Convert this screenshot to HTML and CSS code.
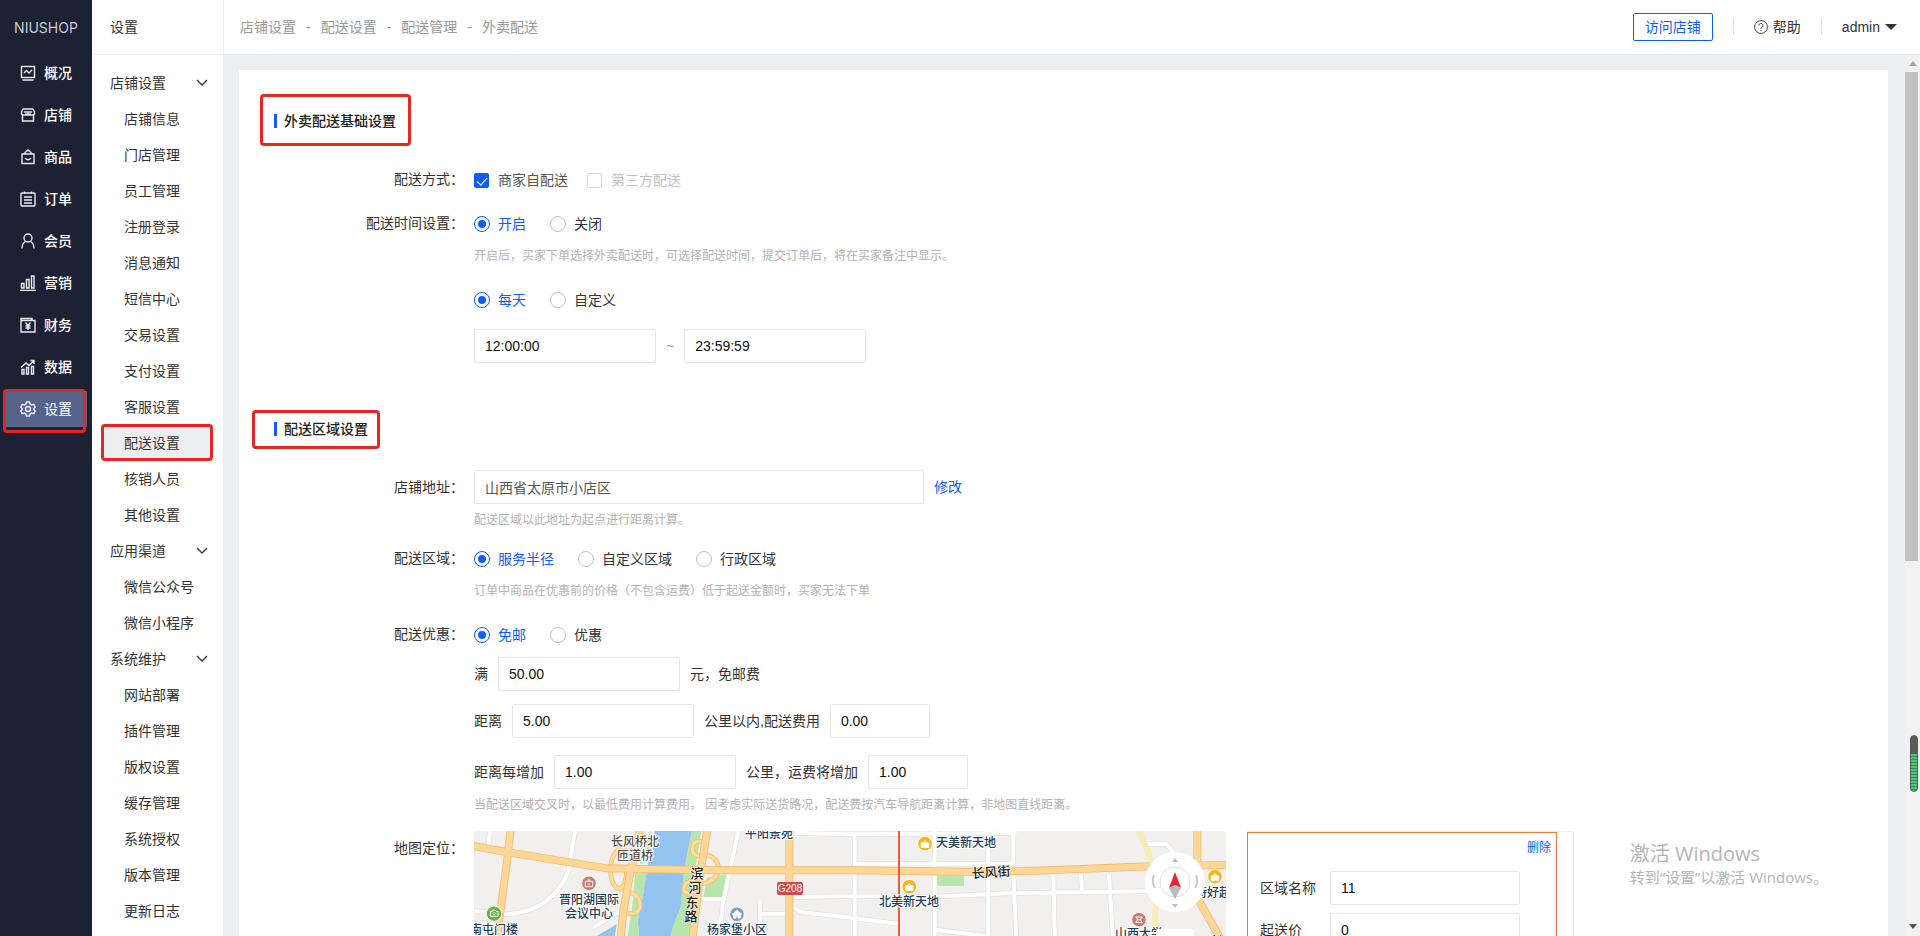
FILE: index.html
```html
<!DOCTYPE html>
<html lang="zh-CN">
<head>
<meta charset="utf-8">
<title>外卖配送</title>
<link rel="stylesheet" href="styles.css">
</head>
<body>
<div class="app">
  <nav class="rail">
    <div class="logo">NIUSHOP</div>
    <a class="rail-item" href="#"><svg viewBox="0 0 16 16"><rect x="1.5" y="1.5" width="13" height="11"/><path d="M4 8l2.500-2.500 2.500 2.500 3-3M2.500 15h11"/></svg>概况</a>
    <a class="rail-item" href="#"><svg viewBox="0 0 16 16"><path d="M3 2h10l1.500 3v1.500a1.500 1.500 0 0 1-1.500 1.500h-10a1.500 1.500 0 0 1-1.500-1.500v-1.500zM4 5h8M5.500 6.500q1.200 2 2.500 0 1.200 2 2.500 0M2.500 8v6h11V8"/></svg>店铺</a>
    <a class="rail-item" href="#"><svg viewBox="0 0 16 16"><path d="M2 5h12v9.500H2zM5 5V3.500L8 1l3 2.500V5M5 9q3 3.500 6 0"/></svg>商品</a>
    <a class="rail-item" href="#"><svg viewBox="0 0 16 16"><rect x="1" y="2" width="14" height="13" rx="1"/><path d="M4.500 0.500v2.500M11.500 0.500v2.500M4 6h8M4 9h8M4 12h8"/></svg>订单</a>
    <a class="rail-item" href="#"><svg viewBox="0 0 16 16"><circle cx="8" cy="5" r="4"/><path d="M2 15.500q0-5 3.500-7M14 15.500q0-5-3.500-7"/></svg>会员</a>
    <a class="rail-item" href="#"><svg viewBox="0 0 16 16"><path d="M1.500 8.500h2.500v4.500H1.500zM6.500 4.500h2.500V13H6.500zM11.500 1h2.500v12h-2.500zM0 15.500h16"/></svg>营销</a>
    <a class="rail-item" href="#"><svg viewBox="0 0 16 16"><path d="M1 3.500V15h14V3.500zM1 3.500V1.500h11v2M5.500 5.500L8 8.500l2.500-3M8 8.500V13M5.500 9h5M5.500 11h5"/></svg>财务</a>
    <a class="rail-item" href="#"><svg viewBox="0 0 16 16"><path d="M2 10.500h2v4.500H2zM6.500 8.500h2V15h-2zM11.500 7.500h2V15h-2zM1 8.500l5-4.500 3 2.500 5-5M10.500 1.500H14V5"/></svg>数据</a>
    <a class="rail-item active" href="#"><svg viewBox="0 0 16 16"><circle cx="8" cy="8" r="2.500"/><path d="M6.500 1h3l.6 2 1.600.9 2-.5 1.500 2.600-1.400 1.500v1l1.400 1.500-1.500 2.600-2-.5-1.600.9-.6 2h-3l-.6-2-1.600-.9-2 .5L.8 10l1.400-1.500v-1L.8 6l1.500-2.600 2 .5L5.900 3z"/></svg>设置</a>
  </nav>

  <nav class="menu">
    <h1 class="menu-title">设置</h1>
    <div class="menu-list">
      <a class="group" href="#">店铺设置<svg viewBox="0 0 12 8"><path d="M1 1l5 5 5-5"/></svg></a>
      <a class="entry" href="#">店铺信息</a>
      <a class="entry" href="#">门店管理</a>
      <a class="entry" href="#">员工管理</a>
      <a class="entry" href="#">注册登录</a>
      <a class="entry" href="#">消息通知</a>
      <a class="entry" href="#">短信中心</a>
      <a class="entry" href="#">交易设置</a>
      <a class="entry" href="#">支付设置</a>
      <a class="entry" href="#">客服设置</a>
      <a class="entry current" href="#">配送设置</a>
      <a class="entry" href="#">核销人员</a>
      <a class="entry" href="#">其他设置</a>
      <a class="group" href="#">应用渠道<svg viewBox="0 0 12 8"><path d="M1 1l5 5 5-5"/></svg></a>
      <a class="entry" href="#">微信公众号</a>
      <a class="entry" href="#">微信小程序</a>
      <a class="group" href="#">系统维护<svg viewBox="0 0 12 8"><path d="M1 1l5 5 5-5"/></svg></a>
      <a class="entry" href="#">网站部署</a>
      <a class="entry" href="#">插件管理</a>
      <a class="entry" href="#">版权设置</a>
      <a class="entry" href="#">缓存管理</a>
      <a class="entry" href="#">系统授权</a>
      <a class="entry" href="#">版本管理</a>
      <a class="entry" href="#">更新日志</a>
    </div>
  </nav>

  <div class="page">
    <header class="topbar">
      <div class="crumbs"><a href="#">店铺设置</a><span>-</span><a href="#">配送设置</a><span>-</span><a href="#">配送管理</a><span>-</span><a href="#">外卖配送</a></div>
      <button class="visit" type="button">访问店铺</button>
      <a class="help" href="#"><svg viewBox="0 0 14 14"><circle cx="7" cy="7" r="6.400"/><path d="M5 5.500a2 2 0 1 1 3 1.700q-1 .5-1 1.500M7 10v1"/></svg>帮助</a>
      <button class="user" type="button">admin<span class="caret"></span></button>
    </header>

    <div class="body">
      <main class="card">
        <h2 class="section-title boxed-tall"><span>外卖配送基础设置</span></h2>
        <div class="row">
          <span class="label">配送方式：</span>
          <div class="choices">
            <label class="choice plain"><input type="checkbox" checked>商家自配送</label>
            <label class="choice off"><input type="checkbox" disabled>第三方配送</label>
          </div>
        </div>
        <div class="row">
          <span class="label">配送时间设置：</span>
          <div class="field">
            <div class="choices">
              <label class="choice"><input type="radio" name="time" checked><span>开启</span></label>
              <label class="choice"><input type="radio" name="time"><span>关闭</span></label>
            </div>
            <p class="hint">开启后，买家下单选择外卖配送时，可选择配送时间，提交订单后，将在买家备注中显示。</p>
          </div>
        </div>
        <div class="row after-hint">
          <span class="label"></span>
          <div class="field">
            <div class="choices">
              <label class="choice"><input type="radio" name="day" checked><span>每天</span></label>
              <label class="choice"><input type="radio" name="day"><span>自定义</span></label>
            </div>
            <div class="line">
              <input class="text" type="text" value="12:00:00" aria-label="开始时间"><span class="tilde">~</span><input class="text" type="text" value="23:59:59" aria-label="结束时间">
            </div>
          </div>
        </div>

        <h2 class="section-title boxed-low"><span>配送区域设置</span></h2>
        <div class="row">
          <label class="label" for="addr">店铺地址：</label>
          <div class="field">
            <div class="line first"><input class="text wide" id="addr" type="text" value="山西省太原市小店区"><a class="link" href="#">修改</a></div>
            <p class="hint">配送区域以此地址为起点进行距离计算。</p>
          </div>
        </div>
        <div class="row after-note">
          <span class="label">配送区域：</span>
          <div class="field">
            <div class="choices">
              <label class="choice"><input type="radio" name="area" checked><span>服务半径</span></label>
              <label class="choice"><input type="radio" name="area"><span>自定义区域</span></label>
              <label class="choice"><input type="radio" name="area"><span>行政区域</span></label>
            </div>
            <p class="hint">订单中商品在优惠前的价格（不包含运费）低于起送金额时，买家无法下单</p>
          </div>
        </div>
        <div class="row after-hint">
          <span class="label">配送优惠：</span>
          <div class="field">
            <div class="choices">
              <label class="choice"><input type="radio" name="deal" checked><span>免邮</span></label>
              <label class="choice"><input type="radio" name="deal"><span>优惠</span></label>
            </div>
            <div class="line close"><label for="full">满</label><input class="text" id="full" type="text" value="50.00"><span>元，免邮费</span></div>
            <div class="line"><label for="dist">距离</label><input class="text" id="dist" type="text" value="5.00"><label for="fee">公里以内,配送费用</label><input class="text short" id="fee" type="text" value="0.00"></div>
            <div class="line loose"><label for="step">距离每增加</label><input class="text" id="step" type="text" value="1.00"><label for="more">公里，运费将增加</label><input class="text short" id="more" type="text" value="1.00"></div>
            <p class="hint">当配送区域交叉时，以最低费用计算费用。 因考虑实际送货路况，配送费按汽车导航距离计算，非地图直线距离。</p>
          </div>
        </div>
        <div class="row after-hint">
          <span class="label">地图定位：</span>
          <svg class="map" viewBox="0 0 752 500" preserveAspectRatio="xMinYMin slice">
            <rect class="land" width="752" height="500"/>
            <g transform="translate(-14 -20) scale(.33333)">
              <path class="water" d="M585 55L560 180 548 260 533 330 540 400H625L645 330 662 290 672 180 697 55zM405 378L470 340 462 390z"/>
              <path class="green" d="M525 186H560L548 260 533 330 540 400H500L520 260zM697 55H725L705 180 690 400H625L645 330 662 290 672 180zM740 200L800 190 790 262H730zM540 110L575 60 566 150 540 160zM1430 193h82v32h-82z"/>
              <path class="lane-edge" d="M345 60L325 180Q280 300 140 310L44 300M90 60L85 105M835 60L790 270M725 265H790L775 400M900 268V340M905 308H1000M1005 290L1020 303 1190 322M1000 258L1185 255 1400 258 1660 246 1940 242 2100 240M1000 65L1165 70 1670 66M1184 70V400M1184 158H1655L1585 160M1424 60V400M1585 60L1582 60M1585 60V400M1660 60V160M1660 190L1670 400M1780 190L1785 400M1863 190L1866 245M1947 190L1960 400M1170 320L1315 338M1430 357L1580 375M400 350L480 300M2060 100H2120L2145 130"/>
              <path class="lane" d="M345 60L325 180Q280 300 140 310L44 300M90 60L85 105M835 60L790 270M725 265H790L775 400M900 268V340M905 308H1000M1005 290L1020 303 1190 322M1000 258L1185 255 1400 258 1660 246 1940 242 2100 240M1000 65L1165 70 1670 66M1184 70V400M1184 158H1655L1585 160M1424 60V400M1585 60V400M1660 60V160M1660 190L1670 400M1780 190L1785 400M1863 190L1866 245M1947 190L1960 400M1170 320L1315 338M1430 357L1580 375M400 350L480 300M2060 100H2120L2145 130"/>
              <path class="ramp-edge" d="M500 105Q455 115 452 170Q450 225 480 235Q500 215 500 180M495 240Q545 250 540 290Q530 315 500 305M738 95Q700 80 697 115Q700 140 735 135M735 130Q780 140 775 185Q755 220 715 220M710 210Q670 205 672 240Q690 255 715 245"/>
              <path class="ramp" d="M500 105Q455 115 452 170Q450 225 480 235Q500 215 500 180M495 240Q545 250 540 290Q530 315 500 305M738 95Q700 80 697 115Q700 140 735 135M735 130Q780 140 775 185Q755 220 715 220M710 210Q670 205 672 240Q690 255 715 245"/>
              <path class="main-edge" d="M152 55L140 160 108 400M540 55L508 200 490 300 480 400M742 55L722 180 695 400M988 55V400M2212 55V260L2285 390M40 105L150 125 440 172 780 178 1180 178 1570 183 1760 178 2070 166 2300 162"/>
              <path class="pale" d="M2035 55L2075 150 2090 240 2080 400"/>
              <path class="main" d="M152 55L140 160 108 400M540 55L508 200 490 300 480 400M742 55L722 180 695 400M988 55V400M2212 55V260L2285 390M40 105L150 125 440 172 780 178 1180 178 1570 183 1760 178 2070 166 2300 162"/>
              <path class="boundary" d="M1317 55V1600"/>
              <g class="pin">
                <circle cx="387" cy="217" r="22" fill="#c97b6e"/><path d="M376 211h22v16h-22zM382 207h10M384 219h6"/>
                <circle cx="102" cy="308" r="23" fill="#6dae45"/><path d="M91 301h6l3-4h5l3 4h6v15H91z"/><circle cx="102" cy="308" r="3"/>
                <circle cx="831" cy="310" r="22" fill="#7f9fc9"/><path class="solid" d="M831 298l14 12h-4v11h-7v-8h-6v8h-7v-11h-4z"/>
                <circle cx="1395" cy="98" r="22" fill="#f6b51e"/><path class="solid" d="M1384 96h22v13h-22z"/><path d="M1389 98q6-18 12 0"/>
                <circle cx="1348" cy="227" r="22" fill="#f6b51e"/><path class="solid" d="M1337 225h22v13h-22z"/><path d="M1342 227q6-18 12 0"/>
                <circle cx="2265" cy="197" r="22" fill="#f6b51e"/><path class="solid" d="M2254 195h22v13h-22z"/><path d="M2259 197q6-18 12 0"/>
                <circle cx="2037" cy="326" r="22" fill="#c97b6e"/><path d="M2027 318h20M2027 334h20M2027 318q10 8 0 16M2047 318q-10 8 0 16M2030 326h14"/>
              </g>
            </g>
            <g class="map-text">
              <g class="road-name"><text x="161" y="15">长风桥北</text><text x="161" y="29">匝道桥</text></g>
              <text x="295" y="7">平阳景苑</text>
              <g class="street"><text x="223" y="47">滨</text><text x="221" y="61">河</text><text x="218" y="76">东</text><text x="217" y="90">路</text><text x="517" y="46" transform="rotate(-4 517 41)">长风街</text><text x="743" y="115">长</text></g>
              <text x="115" y="73">晋阳湖国际</text><text x="115" y="87">会议中心</text>
              <text x="20" y="103">南屯门楼</text><text x="263" y="103">杨家堡小区</text>
              <rect x="303" y="51" width="26" height="13" rx="2" fill="#d0494b"/><text class="badge" x="316" y="61">G208</text>
              <text x="492" y="16">天美新天地</text><text x="435" y="75">北美新天地</text><text x="739" y="66">特好超</text><text x="665" y="107">山西大学</text>
            </g>
            <rect x="682" y="98" width="38" height="30" rx="2" fill="#fff"/>
            <circle cx="701" cy="51" r="30" fill="#fff"/><circle cx="701" cy="51" r="15" fill="#fff" stroke="#e0e0e0"/>
            <path d="M701 41l6 16-6-3-6 3z" fill="#e8232f"/><path d="M695 57l6-3 6 3-6 11z" fill="#b9bcc0"/>
            <path d="M698 31l3-4 3 4zM698 73l3 4 3-4z" fill="#bbb"/><path d="M680 44q-3 7 1 13M722 44q3 7-1 13" fill="none" stroke="#c4c8cc" stroke-width="2"/>
          </svg>
          <aside class="zones">
            <section class="zone">
              <a class="remove" href="#">删除</a>
              <div class="zone-row"><label for="zone-name">区域名称</label><input class="text" id="zone-name" type="text" value="11"></div>
              <div class="zone-row"><label for="zone-min">起送价</label><input class="text" id="zone-min" type="text" value="0"></div>
            </section>
          </aside>
        </div>
      </main>
      <div class="scroll"><span class="up"></span><span class="thumb"></span><span class="down"></span></div>
    </div>
  </div>
  <div class="watermark"><strong>激活 Windows</strong><span>转到“设置”以激活 Windows。</span></div>
  <div class="gauge"></div>
</div>
</body>
</html>
```
FILE: styles.css
```css
* { box-sizing: border-box; }
body {
  margin: 0;
  font: 14px/20px "Liberation Sans", "Noto Sans CJK SC", sans-serif;
  color: #333;
}
a { color: inherit; text-decoration: none; }
h1, h2, p { margin: 0; font-weight: 400; }
button, input { font: inherit; color: inherit; margin: 0; }
.app { display: flex; height: 100vh; overflow: hidden; position: relative; background: #eceef2; }

.rail { flex: none; width: 92px; background: #1c2233; color: #fff; padding: 0 5px; }
.logo { height: 55px; line-height: 56px; font-family: Inter, sans-serif; font-size: 14px; color: #c9ccd4; text-align: center; }
.rail-item { position: relative; display: flex; align-items: center; gap: 8px; height: 36px; margin-bottom: 6px; padding-left: 15px; font-weight: 500; }
.rail-item svg { width: 16px; height: 16px; fill: none; stroke: #e8eaf0; stroke-width: 1.4; }
.rail-item.active { background: #56638a; font-weight: 400; }
.rail-item.active::after { content: ""; position: absolute; inset: -2px 1px -6px -2px; border: 3px solid #e5271f; border-radius: 4px; }

.menu { flex: none; width: 132px; background: #fff; border-right: 1px solid #eceef2; }
.menu-title { height: 55px; padding-left: 18px; border-bottom: 1px solid #eceef2; font-size: 14px; line-height: 54px; }
.menu-list { padding-top: 10px; }
.menu-list a { display: block; height: 36px; line-height: 36px; padding-left: 32px; }
.menu-list .group { display: flex; align-items: center; justify-content: space-between; padding: 0 15px 0 18px; }
.group svg { width: 12px; height: 8px; fill: none; stroke: #333; stroke-width: 1.3; }
.menu-list .current { position: relative; margin: 0 11px; padding-left: 21px; background: #eceef2; }
.current::after { content: ""; position: absolute; inset: -1px -1px 0 -2px; border: 3px solid #e5271f; border-radius: 4px; }

.page { flex: 1; min-width: 0; display: flex; flex-direction: column; }
.topbar { flex: none; display: flex; align-items: center; height: 55px; padding: 0 23px 0 16px; background: #fff; border-bottom: 1px solid #e6e8ec; }
.crumbs { flex: 1; display: flex; gap: 10px; color: #999; }
.visit { height: 28px; width: 80px; padding: 0; border: 1px solid #105cfb; border-radius: 2px; background: #fff; color: #105cfb; }
.help, .user { display: flex; align-items: center; margin-left: 20px; padding-left: 20px; }
.help { gap: 5px; }
.help, .user { height: 16px; border: 0; border-left: 1px solid #e0e0e0; background: none; }
.user { padding-right: 0; gap: 5px; }
.help svg { width: 14px; height: 14px; fill: none; stroke: #444; }
.caret { border: 6px solid transparent; border-top-color: #333; border-bottom: 0; }

.body { flex: 1; min-height: 0; display: flex; overflow: hidden; }
.card { flex: 1; min-width: 0; margin: 15px 17px 0 15px; padding-top: 41px; background: #fff; }
.section-title { position: relative; width: max-content; margin: 0 0 31px 35px; padding: 3px 0; border: 0; font-size: 14px; line-height: 14px; font-weight: 500; color: #222; }
.section-title span { display: block; padding-left: 7px; border-left: 3px solid #105cfb; }
.section-title::after { content: ""; position: absolute; border: 3px solid #e5271f; border-radius: 4px; }
.boxed-tall::after { inset: -17px -15px -15px -14px; }
.boxed-low { margin-top: 56px; }
.boxed-low::after { inset: -9px -12px -10px -22px; }

.row { display: flex; align-items: flex-start; margin-top: 10px; }
.section-title + .row { margin-top: 0; }
.row.after-hint { margin-top: 16px; }
.row.after-note { margin-top: 11px; }
.label { flex: none; width: 225px; margin-right: 10px; line-height: 34px; text-align: right; white-space: nowrap; }
.choices { display: flex; gap: 24px; height: 34px; padding-top: 2px; align-items: center; }
.choice { display: flex; align-items: center; gap: 8px; }
.choice input { appearance: none; position: relative; width: 16px; height: 16px; border: 1px solid #c2c2c2; border-radius: 50%; background: #fff; }
.choice input[type="checkbox"] { width: 15px; height: 15px; border-color: #d9d9d9; border-radius: 2px; }
.choice input:checked { border-color: #105cfb; }
.choice input[type="radio"]:checked::after { content: ""; position: absolute; inset: 3px; border-radius: 50%; background: #105cfb; }
.choice input[type="checkbox"]:checked { background: #105cfb; }
.choice input[type="checkbox"]:checked::after { content: ""; position: absolute; left: 4px; top: 1px; width: 5px; height: 9px; border: solid #fff; border-width: 0 1px 1px 0; transform: rotate(42deg); }
.choice input:checked + span { color: #105cfb; }
.plain { color: #555; gap: 9px; margin-right: -5px; }
.off { color: #c2c2c2; gap: 9px; }
.hint { margin-top: 6px; font-size: 12px; line-height: 20px; color: #b2b2b2; white-space: pre; }
.line { display: flex; align-items: center; gap: 10px; margin-top: 13px; white-space: nowrap; }
.line.first { margin-top: 0; }
.line.close { margin-top: 6px; }
.line.loose { margin-top: 17px; }
.text { width: 182px; height: 34px; padding: 0 10px; border: 1px solid #e6e6e6; border-radius: 2px; background: #fff; color: #111; }
.text.wide { width: 450px; color: #555; }
.text.short { width: 100px; }
.tilde { color: #999; }
.link, .remove { color: #105cfb; }

.map { flex: none; width: 752px; height: 500px; border-radius: 3px; }
.land { fill: #f1f0ee; }
.water { fill: #93c4f0; }
.green { fill: #b7e6ad; }
.lane-edge, .lane, .ramp-edge, .ramp, .main-edge, .main, .pale { fill: none; stroke-linejoin: round; }
.lane-edge { stroke: #dedfe2; stroke-width: 16; }
.lane { stroke: #fff; stroke-width: 12; }
.ramp-edge { stroke: #f0b76a; stroke-width: 14; }
.ramp { stroke: #fedc98; stroke-width: 10; }
.main-edge { stroke: #f2bb70; stroke-width: 24; }
.main { stroke: #fed796; stroke-width: 19; }
.pale { stroke: #f8ecb4; stroke-width: 18; }
.boundary { stroke: #e5401f; stroke-width: 5; }
.pin path, .pin circle { stroke: #fff; stroke-width: 3; fill-rule: evenodd; }
.pin path { fill: none; }
.pin .solid { fill: #fff; }
.map-text { font-family: "Noto Sans CJK SC", sans-serif; font-size: 12px; font-weight: 500; text-anchor: middle; fill: #243f57; stroke: #fff; stroke-width: 2px; paint-order: stroke; }
.map-text rect { stroke: none; }
.road-name { fill: #554a42; }
.street { fill: #222; font-size: 13px; stroke-width: 1px; }
.map-text .badge { font-family: "Liberation Sans", sans-serif; font-size: 10px; fill: #fff; stroke: none; }

.zones { width: 327px; height: 500px; margin-left: 21px; padding-right: 16px; border: 1px solid #eee; border-left: 0; }
.zone { height: 100%; padding: 5px 5px 0 12px; border: 1px solid #e8793f; }
.remove { display: block; text-align: right; font-size: 12px; }
.zone-row { display: flex; align-items: center; margin-top: 8px; }
.remove + .zone-row { margin-top: 13px; }
.zone-row label { width: 70px; }
.zone-row .text { width: 190px; }

.scroll { flex: none; width: 15px; display: flex; flex-direction: column; align-items: center; background: #f1f1f1; }
.up, .down { border: 4px solid transparent; }
.up { margin: 6px 0; border-top: 0; border-bottom: 5px solid #a3a3a3; }
.thumb { width: 13px; height: 489px; background: #c1c1c1; margin-right: 2px; }
.down { margin: auto 0 7px; border-bottom: 0; border-top: 5px solid #505050; }

.watermark { position: absolute; right: 92px; bottom: 48px; display: flex; flex-direction: column; font-family: "Open Sans", "Noto Sans CJK SC", sans-serif; color: #b5b5b5; }
.watermark strong { font-weight: 400; font-size: 20px; line-height: 24px; }
.watermark span { font-size: 15px; line-height: 22px; }
.gauge { position: absolute; right: 2px; top: 735px; width: 8px; height: 57px; border: 1px solid #5a5a58; border-radius: 4px; background: linear-gradient(#5a5a58 18px, transparent 18px), repeating-linear-gradient(#4fc27c 0 2px, #3a8a5c 2px 3px); }
```
